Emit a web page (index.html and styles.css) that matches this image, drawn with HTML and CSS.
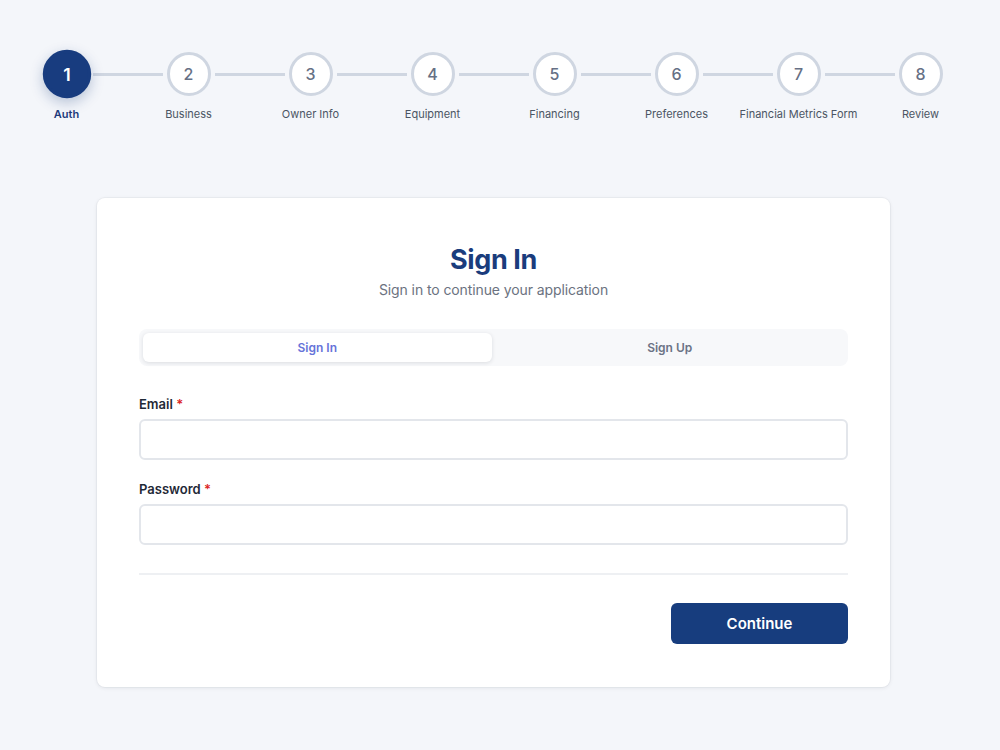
FILE: index.html
```html
<!DOCTYPE html>
<html lang="en">
<head>
<meta charset="utf-8">
<title>Sign In</title>
<link rel="stylesheet" href="styles.css">
</head>
<body>
<div class="page">
  <ol class="stepper">
    <li class="step is-active">
      <div class="step-track"><span class="seg seg-hidden"></span><span class="dot">1</span><span class="seg"></span></div>
      <span class="step-label">Auth</span>
    </li>
    <li class="step">
      <div class="step-track"><span class="seg"></span><span class="dot">2</span><span class="seg"></span></div>
      <span class="step-label">Business</span>
    </li>
    <li class="step">
      <div class="step-track"><span class="seg"></span><span class="dot">3</span><span class="seg"></span></div>
      <span class="step-label">Owner Info</span>
    </li>
    <li class="step">
      <div class="step-track"><span class="seg"></span><span class="dot">4</span><span class="seg"></span></div>
      <span class="step-label">Equipment</span>
    </li>
    <li class="step">
      <div class="step-track"><span class="seg"></span><span class="dot">5</span><span class="seg"></span></div>
      <span class="step-label">Financing</span>
    </li>
    <li class="step">
      <div class="step-track"><span class="seg"></span><span class="dot">6</span><span class="seg"></span></div>
      <span class="step-label">Preferences</span>
    </li>
    <li class="step">
      <div class="step-track"><span class="seg"></span><span class="dot">7</span><span class="seg"></span></div>
      <span class="step-label">Financial Metrics Form</span>
    </li>
    <li class="step">
      <div class="step-track"><span class="seg"></span><span class="dot">8</span><span class="seg seg-hidden"></span></div>
      <span class="step-label">Review</span>
    </li>
  </ol>

  <main class="card">
    <h1 class="card-title">Sign In</h1>
    <p class="card-subtitle">Sign in to continue your application</p>

    <div class="tabs">
      <button class="tab tab-active" type="button">Sign In</button>
      <button class="tab" type="button">Sign Up</button>
    </div>

    <form class="form">
      <label class="field">
        <span class="field-label">Email <span class="req">*</span></span>
        <input class="input" type="email">
      </label>
      <label class="field">
        <span class="field-label">Password <span class="req">*</span></span>
        <input class="input" type="password">
      </label>
      <div class="form-actions">
        <button class="btn-primary" type="button">Continue</button>
      </div>
    </form>
  </main>
</div>
</body>
</html>
```

FILE: styles.css
```css
* {
  box-sizing: border-box;
}

html, body {
  margin: 0;
  padding: 0;
}

body {
  background: #f4f6fa;
  font-family: Inter, "Noto Sans", "Liberation Sans", sans-serif;
  color: #1f2937;
  width: 1000px;
  height: 750px;
  overflow: hidden;
}

.page {
  width: 987px;
  padding-top: 52px;
}

/* ---------- stepper ---------- */
.stepper {
  list-style: none;
  margin: 0 auto;
  padding: 0;
  width: 976px;
  display: flex;
}

.step {
  flex: 1;
  display: flex;
  flex-direction: column;
  align-items: center;
}

.step-track {
  width: 100%;
  display: flex;
  align-items: center;
}

.seg {
  flex: 1;
  height: 3px;
  background: #cfd6e1;
}

.seg-hidden {
  visibility: hidden;
}

.dot {
  width: 44px;
  height: 44px;
  margin: 0 4px;
  border-radius: 50%;
  border: 3px solid #cfd6e1;
  background: #ffffff;
  color: #667085;
  font-size: 16px;
  font-weight: 500;
  display: flex;
  align-items: center;
  justify-content: center;
}

.step.is-active .dot {
  background: #183c7f;
  border-color: #183c7f;
  color: #ffffff;
  font-weight: 600;
  transform: scale(1.1);
  box-shadow: 0 4px 12px rgba(24, 60, 127, 0.28);
}

.step-label {
  margin-top: 11px;
  font-size: 11px;
  line-height: 14px;
  color: #4b5563;
  white-space: nowrap;
}

.step.is-active .step-label {
  color: #1e3a7a;
  font-weight: 600;
}

/* ---------- card ---------- */
.card {
  width: 793px;
  height: 489px;
  margin: 77px auto 0;
  background: #ffffff;
  border-radius: 8px;
  box-shadow: 0 1px 4px rgba(15, 23, 42, 0.08), 0 0 0 1px rgba(15, 23, 42, 0.03);
  padding: 45px 42px 43px;
  display: flex;
  flex-direction: column;
}

.card-title {
  margin: 0;
  text-align: center;
  font-size: 27px;
  line-height: 34px;
  font-weight: 700;
  color: #1a3c7c;
  letter-spacing: -0.4px;
}

.card-subtitle {
  margin: 4px 0 0;
  text-align: center;
  font-size: 14px;
  line-height: 18px;
  color: #6b7280;
  letter-spacing: -0.1px;
}

.tabs {
  margin-top: 30px;
  height: 42px;
  padding: 4px;
  gap: 4px;
  background: #f7f8fa;
  border-radius: 8px;
  display: flex;
}

.tab {
  flex: 1;
  border: 0;
  background: transparent;
  font-family: inherit;
  font-size: 12px;
  font-weight: 600;
  color: #6b7385;
  border-radius: 6px;
  cursor: pointer;
}

.tab-active {
  background: #ffffff;
  color: #6673d9;
  box-shadow: 0 1px 4px rgba(15, 23, 42, 0.12);
}

/* ---------- form ---------- */
.form {
  margin-top: 30px;
  display: flex;
  flex-direction: column;
  flex: 1;
}

.field {
  display: flex;
  flex-direction: column;
}

.field + .field {
  margin-top: 21px;
}

.field-label {
  font-size: 13px;
  line-height: 16px;
  font-weight: 600;
  color: #1f2937;
}

.req {
  color: #dc2626;
}

.input {
  margin-top: 7px;
  height: 41px;
  border: 2px solid #e3e6eb;
  border-radius: 6px;
  background: #ffffff;
  font-family: inherit;
  font-size: 14px;
  padding: 0 12px;
  outline: none;
}

.form-actions {
  margin-top: 28px;
  border-top: 2px solid #eef0f3;
  padding-top: 28px;
  display: flex;
  justify-content: flex-end;
}

.btn-primary {
  width: 177px;
  height: 41px;
  border: 0;
  border-radius: 6px;
  background: #173d7e;
  color: #ffffff;
  font-family: inherit;
  font-size: 15px;
  font-weight: 600;
  cursor: pointer;
}
```
